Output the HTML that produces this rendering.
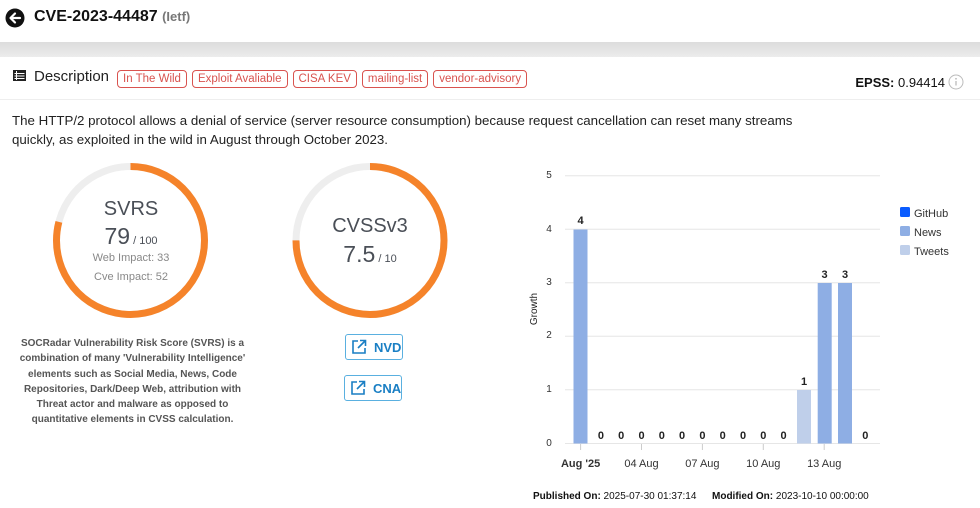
<!DOCTYPE html>
<html><head><meta charset="utf-8"><style>
body{margin:0;width:980px;height:508px;background:#fff;font-family:"Liberation Sans",Arial,sans-serif;position:relative;overflow:hidden;color:#222}
.a{position:absolute;white-space:nowrap}
.tag{display:inline-block;border:1px solid #d9534f;color:#d9534f;border-radius:4px;font-size:11.5px;padding:1px 5px;margin-right:5px;line-height:14px}
.btn{position:absolute;border:1px solid #5ab0e0;border-radius:3px;color:#1a7fc4;font-size:13px;font-weight:bold;height:26px;line-height:26px;box-sizing:border-box}
</style></head><body>
<div class="a" style="left:0;top:42px;width:980px;height:15px;background:linear-gradient(#dcdcdc,#ececec)"></div>
<svg class="a" style="left:5px;top:8px" width="20" height="20" viewBox="0 0 20 20"><circle cx="10" cy="10" r="9.5" fill="#111"/><path d="M15 10H6M10 5.5L5.5 10 10 14.5" stroke="#fff" stroke-width="2.2" fill="none" stroke-linecap="round" stroke-linejoin="round"/></svg>
<div class="a" style="left:34px;top:8px;font-size:16px;font-weight:bold;color:#111">CVE-2023-44487 <span style="font-size:13px;color:#777">(Ietf)</span></div>
<svg class="a" style="left:13px;top:70px" width="13" height="11"><rect x="0" y="0" width="13" height="11" fill="#222"/><path d="M1.5 3.5H11.5M1.5 6H11.5M1.5 8.5H11.5M3.5 1v9" stroke="#fff" stroke-width="1"/></svg>
<div class="a" style="left:34px;top:68px;font-size:15px;color:#222">Description</div>
<div class="a" style="left:117px;top:69px"><span class="tag">In The Wild</span><span class="tag">Exploit Avaliable</span><span class="tag">CISA KEV</span><span class="tag">mailing-list</span><span class="tag">vendor-advisory</span></div>
<div class="a" style="right:35px;top:75px;font-size:13px;color:#111"><b>EPSS:</b> 0.94414</div>
<svg class="a" style="left:948px;top:74px" width="16" height="16"><circle cx="8" cy="8" r="7" fill="none" stroke="#bbb"/><path d="M8 7v4.5" stroke="#bbb" stroke-width="1.3"/><circle cx="8" cy="4.8" r=".9" fill="#bbb"/></svg>
<div class="a" style="left:0;top:99px;width:980px;height:1px;background:#eee"></div>
<div class="a" style="left:12px;top:111px;font-size:13.3px;line-height:19px;color:#222;white-space:normal;width:790px">The HTTP/2 protocol allows a denial of service (server resource consumption) because request cancellation can reset many streams quickly, as exploited in the wild in August through October 2023.</div>

<svg class="a" style="left:0;top:160px" width="470" height="170">
<circle cx="130.5" cy="80.5" r="74" fill="none" stroke="#eee" stroke-width="7"/>
<circle cx="130.5" cy="80.5" r="74" fill="none" stroke="#f5832a" stroke-width="7" stroke-dasharray="367.4 500" transform="rotate(-90 130.5 80.5)"/>
<circle cx="370" cy="80.5" r="74" fill="none" stroke="#eee" stroke-width="7"/>
<circle cx="370" cy="80.5" r="74" fill="none" stroke="#f5832a" stroke-width="7" stroke-dasharray="348.7 500" transform="rotate(-90 370 80.5)"/>
</svg>
<div class="a" style="left:50px;top:198px;width:162px;text-align:center;font-size:20px;color:#4a4f57">SVRS</div>
<div class="a" style="left:50px;top:223px;width:162px;text-align:center;font-size:23px;color:#4a4f57">79<span style="font-size:11px"> / 100</span></div>
<div class="a" style="left:50px;top:252px;width:162px;text-align:center;font-size:11px;color:#888">Web Impact: 33</div>
<div class="a" style="left:50px;top:271px;width:162px;text-align:center;font-size:11px;color:#888">Cve Impact: 52</div>
<div class="a" style="left:290px;top:215px;width:160px;text-align:center;font-size:20px;color:#4a4f57">CVSSv3</div>
<div class="a" style="left:290px;top:241px;width:160px;text-align:center;font-size:23px;color:#4a4f57">7.5<span style="font-size:11px"> / 10</span></div>
<div class="a" style="left:10px;top:336px;width:245px;white-space:normal;text-align:center;font-size:10px;line-height:15.3px;font-weight:bold;color:#555">SOCRadar Vulnerability Risk Score (SVRS) is a combination of many 'Vulnerability Intelligence' elements such as Social Media, News, Code Repositories, Dark/Deep Web, attribution with Threat actor and malware as opposed to quantitative elements in CVSS calculation.</div>
<div class="btn" style="left:345px;top:334px;width:58px;padding-left:28px">NVD</div>
<div class="btn" style="left:344px;top:375px;width:58px;padding-left:28px">CNA</div>
<svg class="a" style="left:351px;top:339px" width="16" height="16"><path d="M7 2H2v12h12V9M9 1.5h5.5V7M14.5 1.5L7 9" fill="none" stroke="#1a7fc4" stroke-width="1.6"/></svg>
<svg class="a" style="left:350px;top:380px" width="16" height="16"><path d="M7 2H2v12h12V9M9 1.5h5.5V7M14.5 1.5L7 9" fill="none" stroke="#1a7fc4" stroke-width="1.6"/></svg>

<svg class="a" style="left:0;top:0" width="980" height="508" font-family="Liberation Sans,Arial,sans-serif">
<g stroke="#e6e6e6" stroke-width="1">
<path d="M565 175.7H880M565 229.2H880M565 282.7H880M565 336.2H880M565 389.7H880M565 443.5H880"/>
<path d="M580.6 444v6M641.5 444v6M702.4 444v6M763.3 444v6M824.2 444v6" stroke="#ccc"/>
</g>
<g font-size="10" fill="#333" text-anchor="middle">
<text x="549" y="178">5</text><text x="549" y="232">4</text><text x="549" y="285">3</text><text x="549" y="338">2</text><text x="549" y="392">1</text><text x="549" y="446">0</text>
</g>
<text x="537" y="309" font-size="10" fill="#222" transform="rotate(-90 537 309)" text-anchor="middle">Growth</text>
<rect x="573.5" y="229.5" width="14" height="214" fill="#8eaee4"/>
<rect x="797" y="390" width="14" height="53.5" fill="#bfcfea"/>
<rect x="817.7" y="283" width="14" height="160.5" fill="#8eaee4"/>
<rect x="838" y="283" width="14" height="160.5" fill="#8eaee4"/>
<g font-size="11" font-weight="bold" fill="#222" text-anchor="middle">
<text x="580.6" y="224">4</text><text x="600.9" y="439">0</text><text x="621.2" y="439">0</text><text x="641.5" y="439">0</text><text x="661.8" y="439">0</text><text x="682.1" y="439">0</text><text x="702.4" y="439">0</text><text x="722.7" y="439">0</text><text x="743" y="439">0</text><text x="763.3" y="439">0</text><text x="783.6" y="439">0</text><text x="804" y="385">1</text><text x="824.5" y="278">3</text><text x="845" y="278">3</text><text x="865.3" y="439">0</text>
</g>
<g font-size="11" fill="#333" text-anchor="middle">
<text x="580.6" y="467" font-weight="bold">Aug '25</text><text x="641.5" y="467">04 Aug</text><text x="702.4" y="467">07 Aug</text><text x="763.3" y="467">10 Aug</text><text x="824.2" y="467">13 Aug</text>
</g>
<rect x="900" y="207" width="10" height="10" rx="1.5" fill="#0a5cff"/>
<rect x="900" y="226" width="10" height="10" rx="1.5" fill="#8eaee4"/>
<rect x="900" y="245" width="10" height="10" rx="1.5" fill="#bfcfea"/>
<g font-size="11" fill="#333"><text x="914" y="217">GitHub</text><text x="914" y="236">News</text><text x="914" y="255">Tweets</text></g>
<text x="533" y="499" font-size="10" fill="#111"><tspan font-weight="bold">Published On:</tspan> 2025-07-30 01:37:14</text>
<text x="712" y="499" font-size="10" fill="#111"><tspan font-weight="bold">Modified On:</tspan> 2023-10-10 00:00:00</text>
</svg>
</body></html>
